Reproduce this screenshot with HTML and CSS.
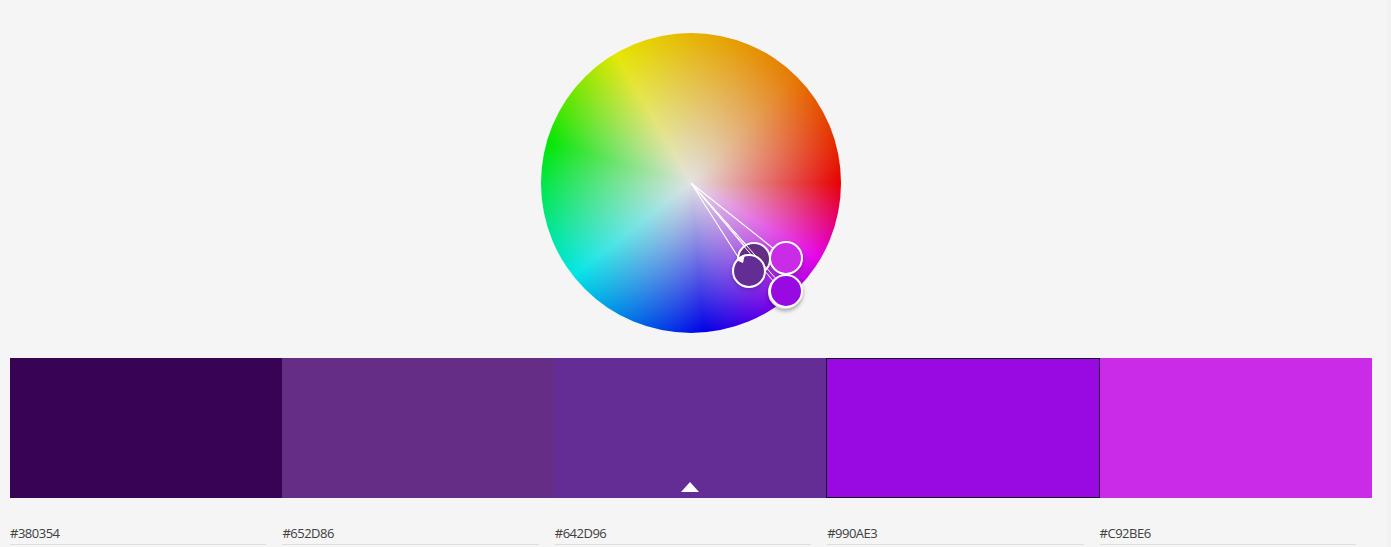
FILE: index.html
```html
<!DOCTYPE html>
<html lang="en">
<head>
<meta charset="utf-8">
<title>Color wheel</title>
<link rel="stylesheet" href="styles.css">
</head>
<body>
<main class="page">
  <div class="wheel">
    <svg class="markers" width="300" height="300" viewBox="0 0 300 300">
      <g fill="none" stroke="#fff" stroke-width="1.1">
        <path d="M150 150 199 227M150 150 206 213M150 150 233 216"/>
      </g>
      <circle class="marker" cx="213" cy="226" r="16" fill="#652d86"/>
      <path d="M150 150 233 249M150 150 203 212M150 150 237 248" fill="none" stroke="#fff" stroke-width="1"/>
      <circle class="marker" cx="208" cy="238" r="16" fill="#642d96"/>
      <path d="M195 227 204 221 202 230Z" fill="#fff"/>
      <circle class="marker" cx="245" cy="225" r="16" fill="#c92be6"/>
      <circle class="marker" cx="244" cy="259" r="16" fill="#380354"/>
      <circle class="marker" cx="245" cy="258" r="16" fill="#990ae3"/>
    </svg>
  </div>
  <div class="palette">
    <div class="swatch c1"></div>
    <div class="swatch c2"></div>
    <div class="swatch c3"><svg width="18" height="10" viewBox="0 0 18 10"><path d="M0 10 9 0 18 10Z" fill="#fff"/></svg></div>
    <div class="swatch c4"></div>
    <div class="swatch c5"></div>
  </div>
  <div class="codes">
    <div class="code">#380354</div>
    <div class="code">#652D86</div>
    <div class="code">#642D96</div>
    <div class="code">#990AE3</div>
    <div class="code">#C92BE6</div>
  </div>
</main>
</body>
</html>
```
FILE: styles.css
```css
* { box-sizing: border-box; }
body { margin: 0; background: #f5f5f5; overflow: hidden; }
.page {
  height: 547px;
  padding: 33px 15px 0 10px;
  border-right: 4px solid #f2f2f2;
}
.wheel {
  width: 300px;
  height: 300px;
  margin-left: 531px;
  border-radius: 50%;
  background:
    radial-gradient(circle closest-side, rgb(226 226 226), rgb(230 230 230 / 0)),
    conic-gradient(#e6b400 0deg, #e67600 45deg, #e60000 90deg, #e600e6 120deg,
      #0000e6 175deg, #00e6e6 232deg, #00e600 286deg, #e6e600 330deg, #e6b400 360deg);
}
.markers { display: block; overflow: visible; }
.marker {
  stroke: #fff;
  stroke-width: 2;
  filter: drop-shadow(0 2px 2px rgb(0 0 0 / .2));
}
.palette {
  display: grid;
  grid-template-columns: 272px 272px 272px 274px 272px;
  height: 140px;
  margin-top: 25px;
}
.swatch { display: flex; justify-content: center; align-items: flex-end; }
.c1 { background: #380354; }
.c2 { background: #652d86; }
.c3 { background: #642d96; padding-bottom: 6px; }
.c4 { background: #990ae3; border: 1px solid #1a0226; }
.c5 { background: #c92be6; }
.codes {
  display: grid;
  grid-template-columns: repeat(5, 256.400px);
  column-gap: 16px;
  margin-top: 25px;
}
.code {
  height: 22px;
  border-bottom: 1px solid #dedede;
  color: #404040;
  font: 13px/20px "Open Sans", sans-serif;
  letter-spacing: -.5px;
}
```
